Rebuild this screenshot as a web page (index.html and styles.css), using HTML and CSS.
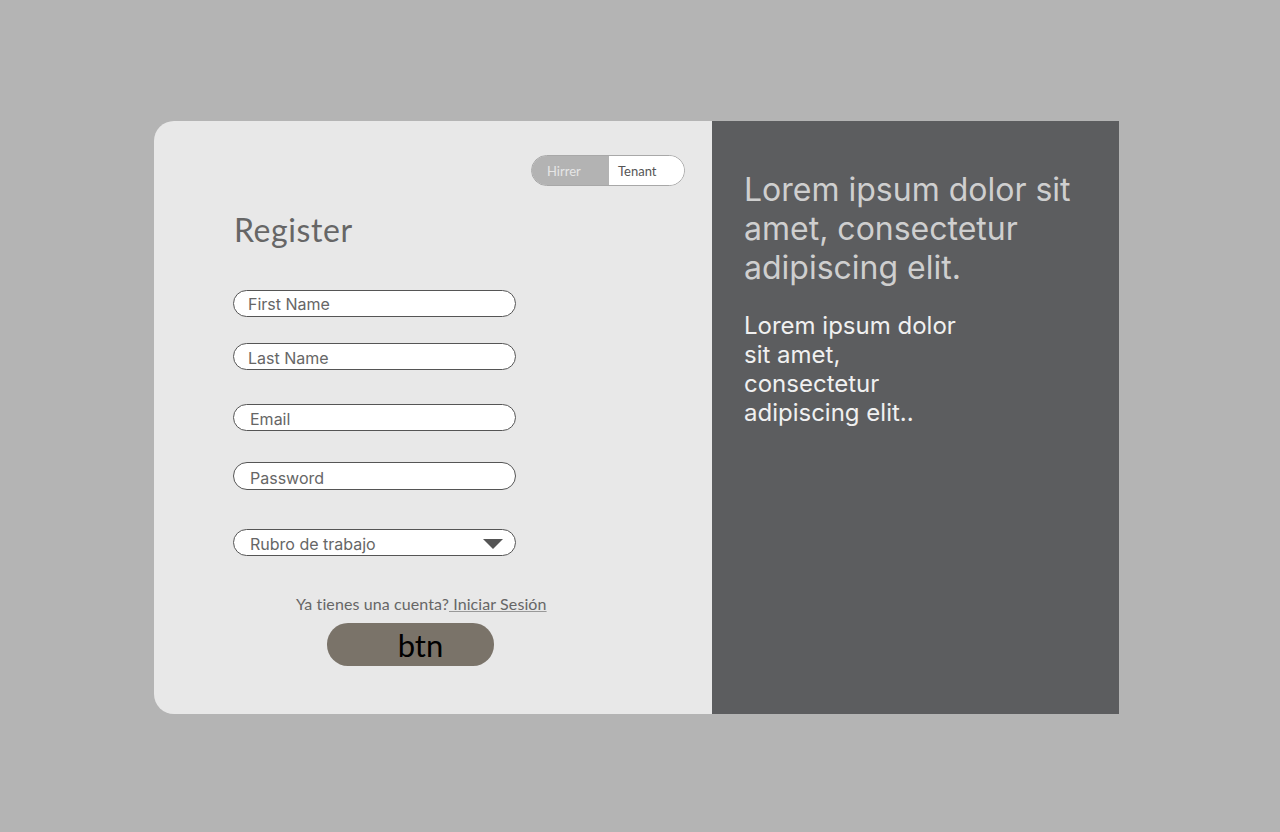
FILE: index.html
```html
<!DOCTYPE html>
<html>
<head>
<meta charset="utf-8">
<link rel="stylesheet" href="styles.css">
</head>
<body>
<div class="card">
  <div class="left">
    <div class="toggle">
      <span class="opt opt-off">Hirrer</span>
      <span class="opt opt-on">Tenant</span>
    </div>
    <h1 class="title">Register</h1>
    <div class="field f1">First Name</div>
    <div class="field f2">Last Name</div>
    <div class="field f3 shift">Email</div>
    <div class="field f4 shift">Password</div>
    <div class="field f5 shift select">
      <span>Rubro de trabajo</span>
      <svg class="caret" width="20" height="10" viewBox="0 0 20 10"><path d="M0 0 H20 L10 10 Z" fill="#555"/></svg>
    </div>
    <p class="login">Ya tienes una cuenta?<a href="#"> Iniciar Sesión</a></p>
    <button class="btn">btn</button>
  </div>
  <div class="right">
    <h2 class="head">Lorem ipsum dolor sit amet, consectetur adipiscing elit.</h2>
    <p class="para">Lorem ipsum dolor sit amet, consectetur adipiscing elit..</p>
  </div>
</div>
</body>
</html>
```
FILE: styles.css
```css
html, body {
  margin: 0;
  padding: 0;
  background: #b4b4b4;
  width: 1280px;
  height: 832px;
}
body {
  padding-top: 121px;
  box-sizing: border-box;
  font-family: Inter, "Noto Sans", sans-serif;
}
.card {
  display: flex;
  margin-left: 154px;
  width: 965px;
  height: 593px;
}
.left {
  width: 558px;
  background: #e8e8e8;
  border-radius: 20px 0 0 20px;
  box-sizing: border-box;
  padding: 34px 27px 0 79px;
  display: flex;
  flex-direction: column;
  align-items: flex-start;
}
.toggle {
  align-self: flex-end;
  display: flex;
  width: 154px;
  height: 31px;
  box-sizing: border-box;
  border: 1px solid #a8a8a8;
  border-radius: 16px;
  overflow: hidden;
  font-family: Lato, "Open Sans", sans-serif;
  font-size: 13px;
}
.opt {
  display: flex;
  align-items: center;
  height: 100%;
}
.opt-off {
  width: 77px;
  background: #b3b3b3;
  color: #e6e6e6;
  padding-left: 15px;
  box-sizing: border-box;
}
.opt-on {
  flex: 1;
  background: #ffffff;
  color: #555;
  padding-left: 9px;
}
.title {
  margin: 24px 0 0 1px;
  font-family: Lato, "Open Sans", sans-serif;
  font-weight: 400;
  font-size: 32px;
  line-height: 40px;
  letter-spacing: 0.6px;
  color: #666;
}
.field {
  width: 283px;
  height: 27px;
  box-sizing: border-box;
  border: 1px solid #555;
  border-radius: 14px;
  background: #fff;
  color: #666;
  font-size: 16px;
  line-height: 16px;
  padding: 6px 0 0 14px;
  display: flex;
  align-items: flex-start;
}
.shift { padding-left: 16px; }
.f1 { margin-top: 40px; padding-top: 5px; }
.f2 { margin-top: 26px; }
.f3 { margin-top: 34px; }
.f4 { margin-top: 31px; height: 28px; padding-top: 7px; }
.f5 { margin-top: 39px; }
.select { justify-content: space-between; padding-right: 12px; }
.caret { margin-top: 3px; }
.login {
  margin: 38px 0 0 63px;
  font-family: Lato, "Open Sans", sans-serif;
  font-size: 16px;
  line-height: 20px;
  letter-spacing: 0.1px;
  color: #666;
}
.login a {
  color: #666;
  text-decoration: underline;
  text-decoration-color: #999;
}
.btn {
  margin: 9px 0 0 94px;
  width: 167px;
  height: 43px;
  border: none;
  border-radius: 21px;
  background: #7a7369;
  color: #000;
  font-family: Lato, "Open Sans", sans-serif;
  font-size: 31px;
  padding: 0 0 0 20px;
  line-height: 40px;
}
.right {
  width: 407px;
  background: #5c5d5f;
  box-sizing: border-box;
  padding: 49px 30px 0 32px;
}
.head {
  margin: 0;
  font-weight: 400;
  font-size: 32px;
  line-height: 39px;
  color: #cfcfcf;
}
.para {
  margin: 24px 0 0;
  width: 225px;
  font-size: 24px;
  line-height: 29px;
  color: #f0f0f0;
}
```
